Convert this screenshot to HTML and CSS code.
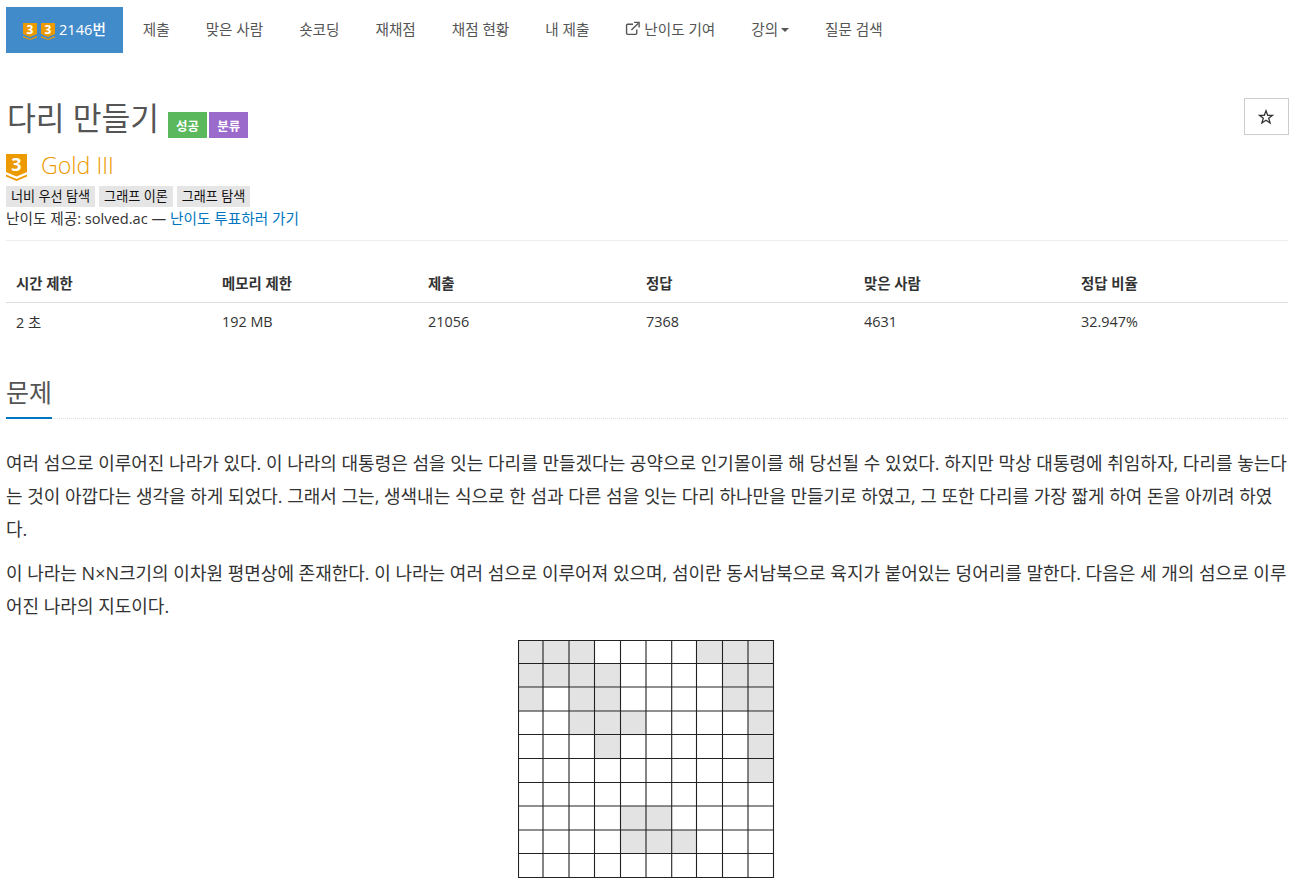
FILE: index.html
```html
<!DOCTYPE html>
<html lang="ko">
<head>
<meta charset="utf-8">
<title>2146번: 다리 만들기</title>
<link rel="stylesheet" href="styles.css">
</head>
<body>
<div class="page">
  <nav class="tabs">
    <a class="tab active">
      <svg class="tier-small" viewBox="0 0 14 17"><path class="tier-fill" d="M0 0H14V11L7 14L0 11Z"/><path class="tier-fill" d="M0 13L7 16L14 13V14.5L7 17L0 14.5Z"/><text x="7" y="11" class="tier-num-small">3</text></svg>
      <svg class="tier-small" viewBox="0 0 14 17"><path class="tier-fill" d="M0 0H14V11L7 14L0 11Z"/><path class="tier-fill" d="M0 13L7 16L14 13V14.5L7 17L0 14.5Z"/><text x="7" y="11" class="tier-num-small">3</text></svg>
      <span>2146번</span>
    </a>
    <a class="tab">제출</a>
    <a class="tab">맞은 사람</a>
    <a class="tab">숏코딩</a>
    <a class="tab">재채점</a>
    <a class="tab">채점 현황</a>
    <a class="tab">내 제출</a>
    <a class="tab">
      <svg class="ext" viewBox="0 0 14 14"><path d="M10.5 8V11.5A1 1 0 0 1 9.500 12.500H2A1 1 0 0 1 1 11.500V4A1 1 0 0 1 2 3H7" /><path d="M5.500 8.500L12 2" /><path d="M8 1.300H12.700V6" /></svg><span>난이도 기여</span>
    </a>
    <a class="tab">강의<span class="caret"></span></a>
    <a class="tab">질문 검색</a>
  </nav>

  <header class="title-row">
    <h1 class="title">다리 만들기</h1>
    <span class="label label-green">성공</span>
    <span class="label label-purple">분류</span>
    <button class="star-btn" aria-label="즐겨찾기">
      <svg viewBox="0 0 16 16"><path d="M8 1.800L9.700 6.300H14.500L10.700 9.200L12.100 14L8 11.200L3.900 14L5.300 9.200L1.500 6.300H6.300Z"/></svg>
    </button>
  </header>

  <div class="tier-row">
    <svg class="tier-big" viewBox="0 0 21 27"><path class="tier-fill" d="M0 0H21V18L10.500 22.500L0 18Z"/><path class="tier-fill" d="M0 20.500L10.500 25L21 20.500V22.500L10.500 27L0 22.500Z"/><text x="10.500" y="17" class="tier-num-big">3</text></svg>
    <span class="tier-name">Gold III</span>
  </div>
  <div class="tags">
    <span class="tag">너비 우선 탐색</span>
    <span class="tag">그래프 이론</span>
    <span class="tag">그래프 탐색</span>
  </div>
  <div class="credit">난이도 제공: solved.ac — <a>난이도 투표하러 가기</a></div>
  <div class="rule"></div>

  <table class="info">
    <thead>
      <tr>
        <th class="c1">시간 제한</th><th class="c1">메모리 제한</th><th class="c2">제출</th><th class="c2">정답</th><th class="c3">맞은 사람</th><th>정답 비율</th>
      </tr>
    </thead>
    <tbody>
      <tr><td>2 초</td><td>192 MB</td><td>21056</td><td>7368</td><td>4631</td><td>32.947%</td></tr>
    </tbody>
  </table>

  <section>
    <h2 class="section-title"><span>문제</span></h2>
    <p class="body-text">여러 섬으로 이루어진 나라가 있다. 이 나라의 대통령은 섬을 잇는 다리를 만들겠다는 공약으로 인기몰이를 해 당선될 수 있었다. 하지만 막상 대통령에 취임하자, 다리를 놓는다는 것이 아깝다는 생각을 하게 되었다. 그래서 그는, 생색내는 식으로 한 섬과 다른 섬을 잇는 다리 하나만을 만들기로 하였고, 그 또한 다리를 가장 짧게 하여 돈을 아끼려 하였다.</p>
    <p class="body-text">이 나라는 N×N크기의 이차원 평면상에 존재한다. 이 나라는 여러 섬으로 이루어져 있으며, 섬이란 동서남북으로 육지가 붙어있는 덩어리를 말한다. 다음은 세 개의 섬으로 이루어진 나라의 지도이다.</p>
    <div class="figure">
      <svg class="map" viewBox="0 0 257 239" width="257" height="239">
        <g class="land">
          <rect x="0" y="0" width="76.800" height="23.800"/><rect x="178.800" y="0" width="77" height="23.800"/>
          <rect x="0" y="23.800" width="102.400" height="23.800"/><rect x="204.800" y="23.800" width="51" height="23.800"/>
          <rect x="0" y="47.600" width="25.600" height="23.800"/><rect x="51.200" y="47.600" width="51.200" height="23.800"/><rect x="204.800" y="47.600" width="51" height="23.800"/>
          <rect x="51.200" y="71.400" width="76.800" height="23.800"/><rect x="230.400" y="71.400" width="25.400" height="23.800"/>
          <rect x="76.800" y="95.200" width="25.600" height="23.800"/><rect x="230.400" y="95.200" width="25.400" height="23.800"/>
          <rect x="230.400" y="119" width="25.400" height="23.800"/>
          <rect x="102.400" y="166" width="51.200" height="24"/>
          <rect x="102.400" y="190" width="76.400" height="23.800"/>
        </g>
        <g class="lines">
          <path d="M0.500 0V238M25 0V238M51 0V238M76.500 0V238M102.500 0V238M128 0V238M153.700 0V238M178.500 0V238M204.500 0V238M230 0V238M255.500 0V238"/>
          <path d="M0 0.500H256M0 23.500H256M0 47H256M0 71H256M0 94.500H256M0 118.500H256M0 142.500H256M0 166H256M0 190H256M0 213.500H256M0 237.500H256"/>
        </g>
      </svg>
    </div>
  </section>
</div>
</body>
</html>
```
FILE: styles.css
```css
* { box-sizing: border-box; }
html, body { margin: 0; padding: 0; height: 886px; overflow: hidden; background: #fff; }
body { font-family: "Open Sans", "Noto Sans CJK KR", sans-serif; font-size: 14.400px; color: #333; }
.page { width: 1282px; margin-left: 6px; padding-top: 7px; }

.tabs { display: flex; height: 46px; }
.tab { display: flex; align-items: center; padding: 0 18px 3px; color: #555; font-size: 14.600px; white-space: nowrap; }
.tab.active { background: #428bca; color: #fff; padding: 0 17px 3px; margin-right: 2px; gap: 4px; font-weight: 500; }
.tier-small { width: 14px; height: 17px; margin-top: 5px; overflow: visible; }
.tier-fill { fill: #ec9a00; }
.tier-num-small { fill: #fff; font: 700 12px "Open Sans", sans-serif; text-anchor: middle; }
.tier-num-big { fill: #fff; font: 700 18px "Open Sans", sans-serif; text-anchor: middle; }
.ext { width: 16px; height: 15px; fill: none; stroke: #555; stroke-width: 1.300; margin-right: 3px; }
.caret { width: 0; height: 0; margin-left: 3px; margin-top: 2px; border-top: 4px solid #555; border-left: 4px solid transparent; border-right: 4px solid transparent; }

.title-row { display: flex; align-items: flex-start; margin-top: 45px; height: 40px; }
.title { margin: 0 9px 0 1px; font-size: 31.300px; font-weight: 400; line-height: 40px; color: #555; }
.label { margin-top: 14px; margin-right: 3px; height: 26px; padding: 0 8px; display: flex; align-items: center; color: #fff; font-size: 12.500px; font-weight: 700; }
.label-green { background: #5cb85c; margin-right: 2px; }
.label-purple { background: #9b6bcc; }
.star-btn { margin-left: auto; margin-right: -1px; width: 45px; height: 37px; padding: 0 2px 0 0; display: flex; align-items: center; justify-content: center; background: #fff; border: 1px solid #ccc; border-radius: 0; }
.star-btn svg { width: 16px; height: 16px; fill: none; stroke: #333; stroke-width: 1.300; }

.tier-row { display: flex; align-items: center; height: 30px; margin-top: 14px; gap: 14px; }
.tier-big { width: 21px; height: 27px; overflow: visible; }
.tier-name { color: #ec9a00; font-size: 23.200px; line-height: 26px; font-weight: 300; padding-bottom: 4px; }

.tags { display: flex; gap: 4px; margin-top: 4px; height: 21px; }
.tag { background: #e5e5e5; color: #111; font-size: 13.100px; line-height: 21px; padding: 0 5px; }
.credit { font-size: 14.650px; line-height: 22px; color: #333; }
.credit a { color: #0076c0; }
.rule { height: 1px; background: #eee; margin-top: 11px; }

.info { width: 100%; border-collapse: collapse; margin-top: 21px; table-layout: fixed; font-size: 14.400px; }
.info th { text-align: left; padding: 2px 10px 0; height: 40px; font-weight: 700; border-bottom: 1px solid #ddd; }
.info td { padding: 0 10px 1px; height: 40px; color: #333; }
.c1 { width: 206px; }
.c2 { width: 218px; }
.c3 { width: 217px; }

.section-title { margin: 35px 0 0; height: 42px; font-size: 25px; font-weight: 400; color: #555; border-bottom: 1px dotted #ddd; line-height: 30px; position: relative; }
.section-title span { display: inline-block; height: 42px; width: 46px; border-bottom: 2px solid #0076c0; }
.body-text { margin: 0 0 11px; font-size: 18px; line-height: 33px; color: #333; }
.section-title + .body-text { margin-top: 28px; }

.figure { display: flex; justify-content: center; margin-top: 17px; }
.map { display: block; margin-right: 1px; }
.land { fill: #e3e3e3; }
.lines { fill: none; stroke: #222; stroke-width: 1.100; }
```
